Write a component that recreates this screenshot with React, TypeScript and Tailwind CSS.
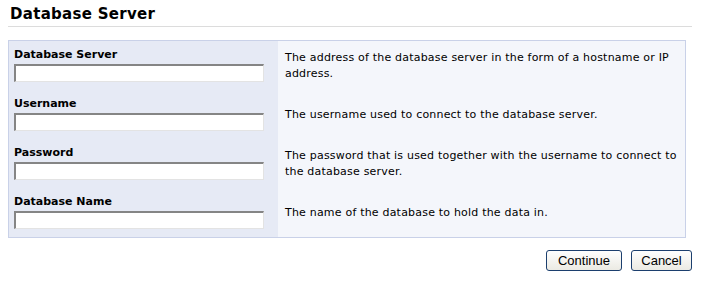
import React from 'react';

const fields = [
  {
    label: 'Database Server',
    help: 'The address of the database server in the form of a hostname or IP address.',
  },
  {
    label: 'Username',
    help: 'The username used to connect to the database server.',
  },
  {
    label: 'Password',
    help: 'The password that is used together with the username to connect to the database server.',
  },
  {
    label: 'Database Name',
    help: 'The name of the database to hold the data in.',
  },
];

const App = () => {
  return (
    <div className="w-[706px] h-[283px] bg-white font-['DejaVu_Sans',sans-serif] text-black">
      <div className="px-2 pt-[5px]">
        <h1 className="pl-[2px] text-[15px] leading-[19px] font-bold tracking-[0.3px]">Database Server</h1>
        <div className="mt-[2px] w-[684px] h-px bg-[#dcdcdc]" />
      </div>

      <div className="mx-2 mt-[13px] w-[678px] border border-[#c9d1e8]">
        {fields.map((f) => (
          <div key={f.label} className="flex">
            <div className="w-[269px] shrink-0 bg-[#e6eaf5] px-[5px] pt-[7px] pb-[8px]">
              <div className="text-[11px] leading-[14px] font-bold">{f.label}</div>
              <input
                type={f.label === 'Password' ? 'password' : 'text'}
                className="mt-[2px] block w-[250px] h-[18px] bg-white border-t-2 border-l-2 border-b border-r border-t-[#858585] border-l-[#858585] border-b-[#e3e3e3] border-r-[#e3e3e3] outline-none"
              />
            </div>
            <div className="flex flex-1 items-center bg-[#f4f6fb] pl-[7px] pr-[4px] text-[11px] leading-[16px] tracking-[0.2px]">
              {f.help}
            </div>
          </div>
        ))}
      </div>

      <div className="flex justify-end gap-[9px] pr-[14px] mt-[12px] font-['Liberation_Sans',sans-serif]">
        <button className="w-[76px] h-[21px] rounded-[3px] border border-[#1c3f6e] bg-gradient-to-b from-[#fefefe] to-[#ebeae3] text-[13px] leading-none">
          Continue
        </button>
        <button className="w-[61px] h-[21px] rounded-[3px] border border-[#1c3f6e] bg-gradient-to-b from-[#fefefe] to-[#ebeae3] text-[13px] leading-none">
          Cancel
        </button>
      </div>
    </div>
  );
};

export default App;
